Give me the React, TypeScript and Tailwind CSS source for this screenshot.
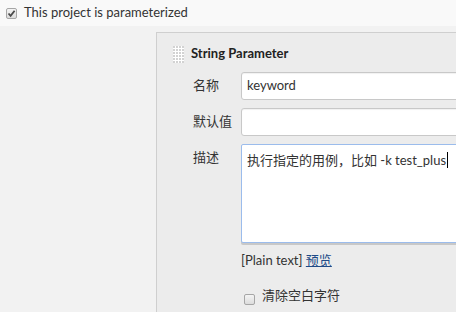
import React from 'react';

const FONT = 'Lato, "Noto Sans CJK SC", sans-serif';

function Grip() {
  const cells = [];
  for (let r = 0; r < 6; r++) {
    for (let c = 0; c < 4; c++) {
      cells.push(<rect key={`${r}-${c}`} x={c * 3} y={r * 3} width={2} height={2} fill="#d2d2d2" />);
    }
  }
  return (
    <svg width="11" height="17" viewBox="0 0 11 17" className="bg-white">
      {cells}
    </svg>
  );
}

function CheckBox({ checked }: { checked?: boolean }) {
  return (
    <span className="inline-flex h-[11px] w-[11px] items-center justify-center rounded-[2px] border border-[#a6a6a6] bg-gradient-to-b from-[#f4f4f4] to-[#dcdcdc]">
      {checked && (
        <svg width="9" height="9" viewBox="0 0 9 9">
          <path d="M1.5 4.5 L3.6 6.8 L7.6 1.8" fill="none" stroke="#4a4a4a" strokeWidth="1.8" />
        </svg>
      )}
    </span>
  );
}

function Field({ label, value }: { label: string; value?: string }) {
  return (
    <div className="flex h-[28px] items-center">
      <div className="w-[48px] text-[13px] text-[#333]">{label}</div>
      <div className="flex h-[28px] w-[260px] items-center rounded-[3px] border border-[#c8c8c8] bg-white pl-[5px] text-[13px] text-[#333] shadow-[inset_0_1px_1px_rgba(0,0,0,0.06)]">
        {value}
      </div>
    </div>
  );
}

export default function App() {
  return (
    <div className="h-[312px] w-[456px] overflow-hidden bg-[#f2f2f2]" style={{ fontFamily: FONT }}>
      <div className="flex h-[26px] items-center gap-[7px] bg-[#f9f9f9] pl-[6px]">
        <CheckBox checked />
        <span className="text-[13px] text-[#333]">This project is parameterized</span>
      </div>
      <div className="flex h-[286px] pl-[155px] pt-[6px]">
        <div className="w-[5px] bg-[#d9d9d9]" />
        <div className="ml-[1px] flex-1 border-l border-t border-[#cfcfcf] bg-[#ececec] pl-[16px]">
          <div className="mt-[8px] flex h-[26px] items-center gap-[7px]">
            <Grip />
            <span className="text-[13px] font-bold text-[#222]">String Parameter</span>
          </div>
          <div className="ml-[20px] mt-[5px] flex flex-col gap-[8px]">
            <Field label="名称" value="keyword" />
            <Field label="默认值" />
            <div className="flex">
              <div className="w-[48px] pt-[4px] text-[13px] text-[#333]">描述</div>
              <div className="flex flex-col">
                <div className="h-[99px] w-[260px] rounded-[2px] border border-[#9bbcec] bg-white pl-[5px] pt-[4px] text-[13px] text-[#333] shadow-[0_2px_0_#c8c8c8]">
                  执行指定的用例，比如 -k test_plus<span className="ml-[1px] inline-block h-[16px] w-px translate-y-[3px] bg-black" />
                </div>
                <div className="mt-[8px] text-[13px] text-[#333]">
                  [Plain text] <span className="text-[#204a87] underline">预览</span>
                </div>
                <div className="mt-[10px] flex items-center gap-[7px] pl-[3px]">
                  <span className="mt-[6px]"><CheckBox /></span>
                  <span className="text-[13px] text-[#333]">清除空白字符</span>
                </div>
              </div>
            </div>
          </div>
        </div>
      </div>
    </div>
  );
}
